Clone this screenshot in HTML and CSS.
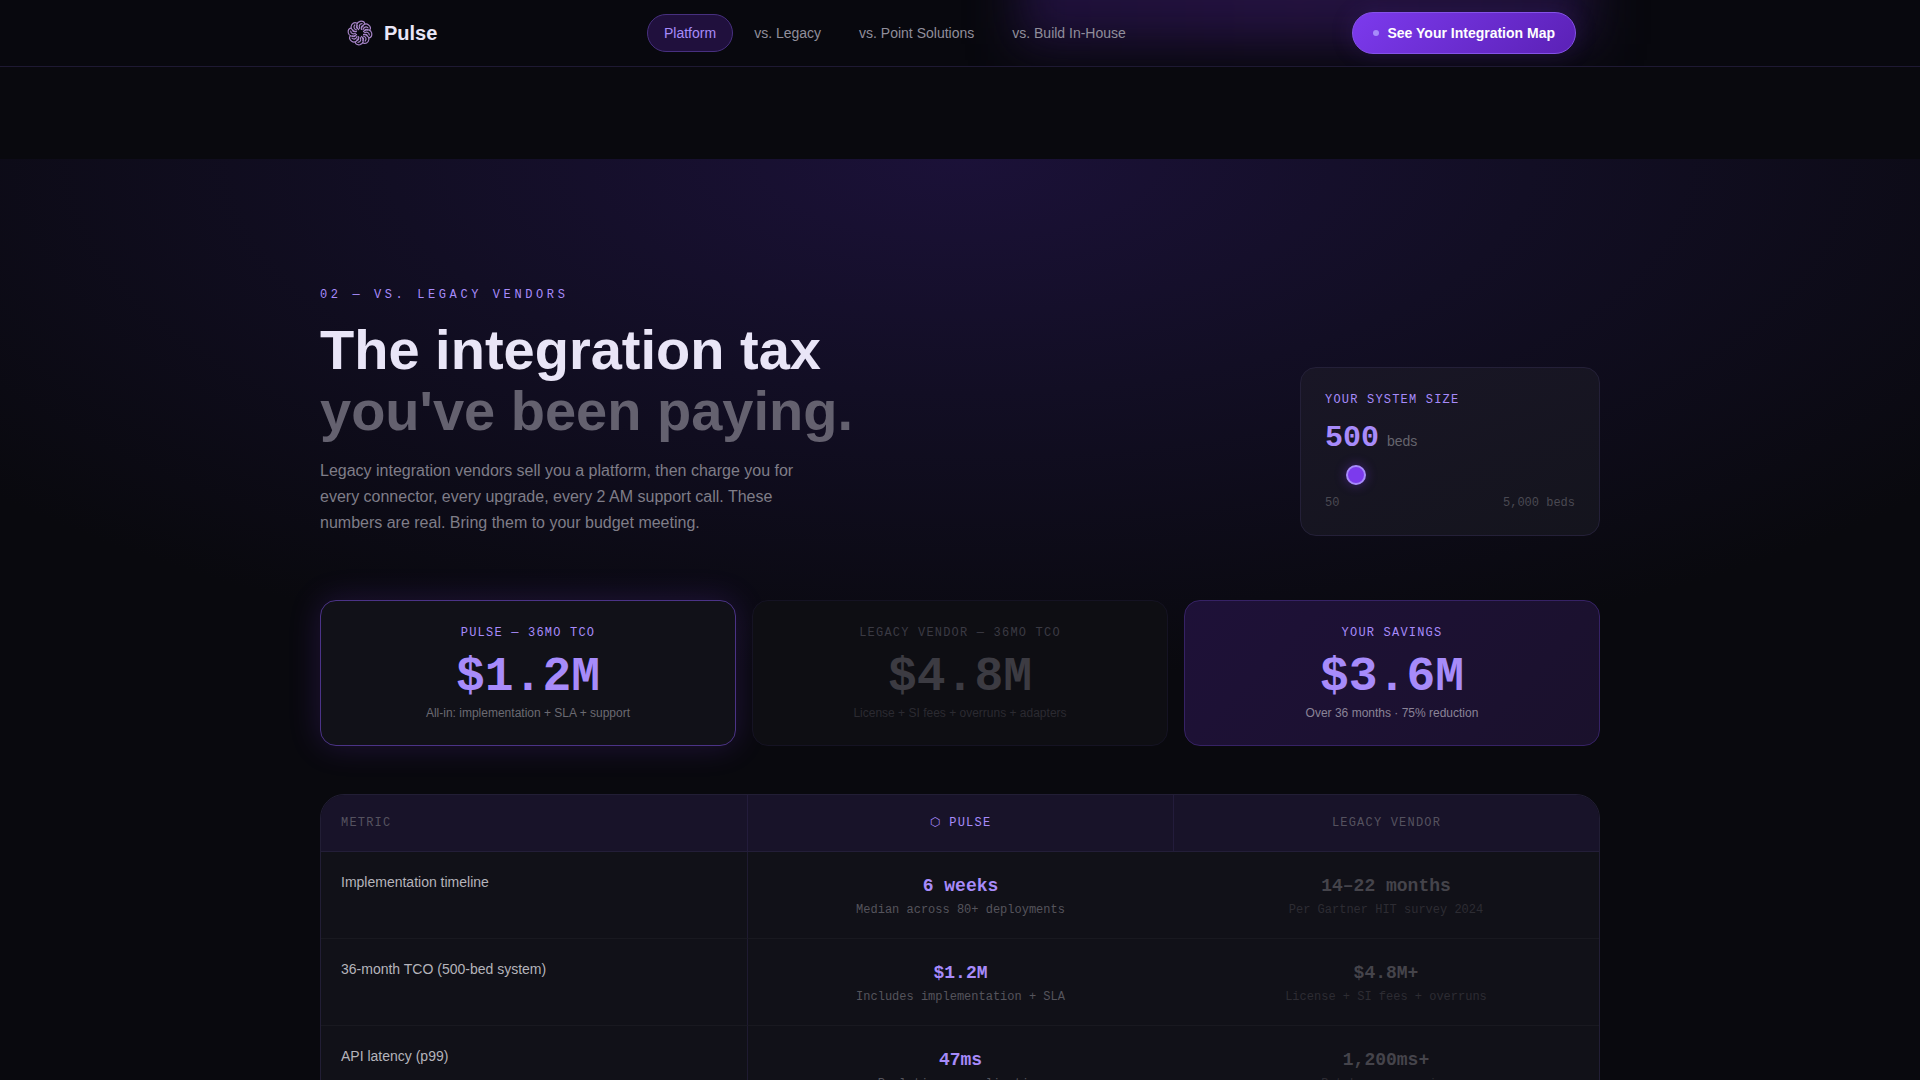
FILE: index.html
```html
<!DOCTYPE html>
<html lang="en">
<head>
<meta charset="utf-8">
<meta name="viewport" content="width=device-width, initial-scale=1">
<title>Pulse</title>
<link rel="stylesheet" href="styles.css">
</head>
<body>
<header class="topbar">
  <div class="topbar-inner">
    <a class="brand" href="#">
      <svg class="brand-mark" viewBox="0 0 32 32" fill="none" stroke="#a583c6" stroke-width="1.2" stroke-linecap="round" aria-hidden="true">
        <defs><path id="petal" d="M14.500 12.500C11.500 9.500 12.500 5 16 4.300C18.500 3.900 20.500 5.200 20.800 7M15.800 11.500C14.500 9 15.500 6.800 18 6.700M17.500 11C17 9.500 17.800 8.600 19.200 8.800"/></defs>
        <use href="#petal"/>
        <use href="#petal" transform="rotate(45 16 16)"/>
        <use href="#petal" transform="rotate(90 16 16)"/>
        <use href="#petal" transform="rotate(135 16 16)"/>
        <use href="#petal" transform="rotate(180 16 16)"/>
        <use href="#petal" transform="rotate(225 16 16)"/>
        <use href="#petal" transform="rotate(270 16 16)"/>
        <use href="#petal" transform="rotate(315 16 16)"/>
      </svg>
      <span>Pulse</span>
    </a>
    <nav class="links" aria-label="Main">
      <a class="link link-active" href="#platform">Platform</a>
      <a class="link" href="#legacy">vs. Legacy</a>
      <a class="link" href="#point">vs. Point Solutions</a>
      <a class="link" href="#build">vs. Build In-House</a>
    </nav>
    <button class="cta" type="button"><span class="cta-dot"></span>See Your Integration Map</button>
  </div>
</header>
<main>
  <section class="legacy" id="legacy">
    <div class="container">
      <div class="intro">
        <div class="intro-text">
          <p class="eyebrow">02 — VS. LEGACY VENDORS</p>
          <h2 class="title">The integration tax<br><span class="title-dim">you've been paying.</span></h2>
          <p class="lead">Legacy integration vendors sell you a platform, then charge you for every connector, every upgrade, every 2 AM support call. These numbers are real. Bring them to your budget meeting.</p>
        </div>
        <div class="sizer">
          <label class="label" for="beds">YOUR SYSTEM SIZE</label>
          <div class="sizer-value"><output class="sizer-number" for="beds">500</output><span class="sizer-unit">beds</span></div>
          <input class="range" id="beds" type="range" min="50" max="5000" step="50" value="500">
          <div class="sizer-scale"><span>50</span><span>5,000 beds</span></div>
        </div>
      </div>
      <div class="stats">
        <article class="stat stat-pulse">
          <h3 class="label">PULSE — 36MO TCO</h3>
          <p class="stat-value">$1.2M</p>
          <p class="stat-note">All-in: implementation + SLA + support</p>
        </article>
        <article class="stat stat-legacy">
          <h3 class="label">LEGACY VENDOR — 36MO TCO</h3>
          <p class="stat-value">$4.8M</p>
          <p class="stat-note">License + SI fees + overruns + adapters</p>
        </article>
        <article class="stat stat-savings">
          <h3 class="label">YOUR SAVINGS</h3>
          <p class="stat-value">$3.6M</p>
          <p class="stat-note">Over 36 months · 75% reduction</p>
        </article>
      </div>
      <div class="table-wrap">
        <table class="compare">
          <thead>
            <tr><th scope="col">METRIC</th><th scope="col" class="head-pulse">⬡ PULSE</th><th scope="col">LEGACY VENDOR</th></tr>
          </thead>
          <tbody>
            <tr>
              <th scope="row">Implementation timeline</th>
              <td class="pulse"><strong>6 weeks</strong><small>Median across 80+ deployments</small></td>
              <td class="old"><strong>14–22 months</strong><small>Per Gartner HIT survey 2024</small></td>
            </tr>
            <tr>
              <th scope="row">36-month TCO (500-bed system)</th>
              <td class="pulse"><strong>$1.2M</strong><small>Includes implementation + SLA</small></td>
              <td class="old"><strong>$4.8M+</strong><small>License + SI fees + overruns</small></td>
            </tr>
            <tr>
              <th scope="row">API latency (p99)</th>
              <td class="pulse"><strong>47ms</strong><small>Real-time normalization</small></td>
              <td class="old"><strong>1,200ms+</strong><small>Batch reprocessing</small></td>
            </tr>
          </tbody>
        </table>
      </div>
    </div>
  </section>
</main>
</body>
</html>
```
FILE: styles.css
```css
:root {
  --bg: #09090e;
  --violet: #a78bfa;
  --sans: "Liberation Sans", Arial, sans-serif;
  --mono: "Liberation Mono", "DejaVu Sans Mono", monospace;
}

*, *::before, *::after { box-sizing: border-box; }

html { scrollbar-width: none; }

body {
  margin: 0;
  background: var(--bg);
  color: #e9e5f7;
  font: 16px/26px var(--sans);
}

h2, h3, p { margin: 0; }

/* Top bar */
.topbar {
  position: relative;
  overflow: hidden;
  border-bottom: 1px solid #1e1933;
  background: #08080e;
}

.topbar::before {
  content: "";
  position: absolute;
  top: -70px;
  left: 53%;
  width: 30%;
  height: 114px;
  background: linear-gradient(90deg, #1e1039, #241240 50%, #1b1032);
  filter: blur(24px);
}

.topbar-inner {
  position: relative;
  display: flex;
  align-items: center;
  justify-content: space-between;
  max-width: 1280px;
  margin: 0 auto;
  padding: 12px 24px;
}

.brand {
  display: flex;
  align-items: center;
  gap: 8px;
  color: #e9e5f7;
  font-size: 20px;
  font-weight: 700;
  text-decoration: none;
}

.brand-mark { width: 32px; height: 32px; }

.links { display: flex; gap: 4px; }

.link {
  padding: 8px 16px;
  border: 1px solid transparent;
  border-radius: 20px;
  color: #908e9b;
  font-size: 14px;
  line-height: 20px;
  text-decoration: none;
}

.link-active {
  border-color: #47307f;
  background: #20103d;
  color: var(--violet);
}

.cta {
  display: flex;
  align-items: center;
  gap: 8px;
  padding: 10px 20px;
  border: 1px solid #8552e8;
  border-radius: 21px;
  background: linear-gradient(135deg, #7c3aed, #5b21b6);
  box-shadow: 0 0 24px rgba(124, 58, 237, 0.15);
  color: #fff;
  font: 700 14px/20px var(--sans);
}

.cta-dot {
  width: 6px;
  height: 6px;
  border-radius: 50%;
  background: var(--violet);
}

/* Section */
.legacy {
  margin-top: 92px;
  padding: 128px 24px;
  background: radial-gradient(ellipse 66% 520px at 50% 0, #1b1138, #120e24 45%, transparent), var(--bg);
}

.container { max-width: 1280px; margin: 0 auto; }

.intro {
  display: flex;
  align-items: flex-end;
  justify-content: space-between;
  gap: 32px;
  margin-bottom: 64px;
}

.eyebrow {
  margin-bottom: 16px;
  color: var(--violet);
  font: 12px/16px var(--mono);
  letter-spacing: 0.3em;
}

.title {
  margin-bottom: 17px;
  font-size: 56px;
  line-height: 61px;
}

.title-dim { color: #64616f; }

.lead { max-width: 480px; color: #7f7d88; }

.label {
  display: block;
  color: var(--violet);
  font: 12px/16px var(--mono);
  letter-spacing: 0.1em;
}

/* System size */
.sizer {
  width: 300px;
  padding: 24px;
  border: 1px solid #242038;
  border-radius: 16px;
  background: linear-gradient(160deg, #191626, #14141d);
}

.sizer-value {
  display: flex;
  align-items: baseline;
  gap: 8px;
  margin-top: 12px;
  line-height: 36px;
}

.sizer-number { color: var(--violet); font: 700 30px/36px var(--mono); }

.sizer-unit { color: #65646d; font-size: 14px; }

.range {
  display: block;
  appearance: none;
  width: 100%;
  height: 20px;
  margin: 6px 0 10px;
  background: transparent;
}

.range::-webkit-slider-thumb {
  appearance: none;
  width: 20px;
  height: 20px;
  border: 2px solid var(--violet);
  border-radius: 50%;
  background: #7c3aed;
  box-shadow: 0 0 12px rgba(124, 58, 237, 0.4);
}

.sizer-scale {
  display: flex;
  justify-content: space-between;
  color: #4a4952;
  font: 12px/16px var(--mono);
}

/* Totals */
.stats {
  display: grid;
  grid-template-columns: repeat(3, 1fr);
  gap: 16px;
  margin-bottom: 48px;
}

.stat {
  padding: 24px;
  border: 1px solid #191629;
  border-radius: 16px;
  background: #111118;
  text-align: center;
}

.stat-value {
  margin: 12px 0 4px;
  color: var(--violet);
  font: 700 48px/48px var(--mono);
}

.stat-note { color: #6b6a72; font-size: 12px; line-height: 16px; }

.stat-pulse {
  border-color: #4b3386;
  box-shadow: 0 0 32px rgba(124, 58, 237, 0.2);
}

.stat-legacy { background: #0e0e13; border-color: #151323; }
.stat-legacy .label { color: #3b3a43; }
.stat-legacy .stat-value { color: #3c3b42; }
.stat-legacy .stat-note { color: #2b2a31; }

.stat-savings { border-color: #362265; background: linear-gradient(135deg, #1e1138, #1a112c); }
.stat-savings .stat-note { color: #8a8397; }

/* Comparison table */
.table-wrap {
  overflow: hidden;
  border: 1px solid #221e35;
  border-radius: 24px;
  background: #111118;
}

.compare {
  width: 100%;
  table-layout: fixed;
  border-collapse: separate;
  border-spacing: 0;
}

.compare th, .compare td {
  padding: 20px;
  border-bottom: 1px solid #191920;
  text-align: center;
  vertical-align: top;
}

.compare thead th {
  border-bottom-color: #231e38;
  background: #181329;
  color: #55525f;
  font: 12px/16px var(--mono);
  letter-spacing: 0.1em;
}

.compare thead th + th { border-left: 1px solid #231c3b; }

.compare thead .head-pulse { color: var(--violet); }

.compare th:first-child { text-align: left; }

.compare tbody th {
  color: #b5b4bb;
  font-size: 14px;
  font-weight: 400;
  line-height: 20px;
}

.compare .pulse { border-left: 1px solid #1f1b31; }

.compare strong {
  display: block;
  font: 700 18px/28px var(--mono);
}

.compare small {
  display: block;
  margin-top: 2px;
  font: 12px/16px var(--mono);
}

.pulse strong { color: var(--violet); }
.pulse small { color: #55545c; }
.old strong { color: #45444b; }
.old small { color: #2d2c33; }
```
